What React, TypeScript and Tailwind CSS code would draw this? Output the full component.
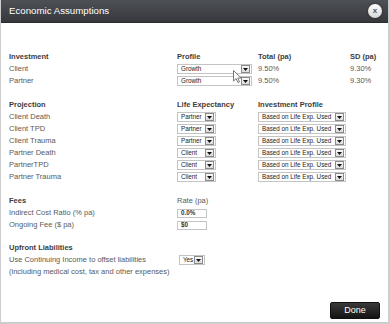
import React from "react";

const font = { fontFamily: '"Liberation Sans", Arial, sans-serif' };

const Select = ({ value, width }: { value: string; width: string }) => (
  <div
    className={`flex h-[10px] items-center justify-between border border-[#c4c4c4] bg-white pl-[3px] pr-[1px] ${width}`}
  >
    <span className="text-[6.3px] leading-none text-[#222]">{value}</span>
    <span className="flex h-[8px] w-[9px] items-center justify-center border border-[#8a8a8a] bg-gradient-to-b from-[#fafafa] to-[#dcdcdc]">
      <svg width="5" height="3" viewBox="0 0 5 3">
        <path d="M0 0h5L2.5 3z" fill="#111" />
      </svg>
    </span>
  </div>
);

const Input = ({ value }: { value: string }) => (
  <div className="flex h-[9px] w-[30px] items-center border border-[#c4c4c4] bg-white pl-[3px]">
    <span className="text-[6.3px] font-bold leading-none text-[#333]">{value}</span>
  </div>
);

const Row = ({ children }: { children: React.ReactNode }) => (
  <div className="grid h-[12px] grid-cols-[168px_81px_92px_1fr] items-center">{children}</div>
);

const Head = ({ children }: { children?: React.ReactNode }) => (
  <span className="font-bold text-[#3c3c3c]">{children}</span>
);

const Label = ({ children }: { children?: React.ReactNode }) => (
  <span className="text-[#595959]">{children}</span>
);

const projection = [
  ["Client Death", "Partner"],
  ["Client TPD", "Partner"],
  ["Client Trauma", "Partner"],
  ["Partner Death", "Client"],
  ["PartnerTPD", "Client"],
  ["Partner Trauma", "Client"],
];

export default function App() {
  return (
    <div
      style={font}
      className="relative flex h-[324px] w-[390px] flex-col overflow-hidden border-b-2 border-l border-r-2 border-[#cdcdcd] bg-white"
    >
      <div className="flex h-[23px] shrink-0 items-center justify-between border-b border-[#2a2c2f] bg-gradient-to-b from-[#4d5055] to-[#36383c] pl-[8px] pr-[6px]">
        <span className="text-[9.7px] leading-none text-white">Economic Assumptions</span>
        <span className="flex h-[14px] w-[14px] items-center justify-center rounded-full bg-gradient-to-b from-[#ffffff] to-[#d6d6d6] text-[8px] font-bold leading-none text-[#555] shadow-[0_0_2px_rgba(0,0,0,0.6)]">
          x
        </span>
      </div>

      <div className="flex flex-1 flex-col pl-[8px] pt-[28px] text-[7.5px] leading-none">
        <Row>
          <Head>Investment</Head>
          <Head>Profile</Head>
          <Head>Total (pa)</Head>
          <Head>SD (pa)</Head>
        </Row>
        <Row>
          <Label>Client</Label>
          <Select value="Growth" width="w-[75px]" />
          <Label>9.50%</Label>
          <Label>9.30%</Label>
        </Row>
        <Row>
          <Label>Partner</Label>
          <Select value="Growth" width="w-[75px]" />
          <Label>9.50%</Label>
          <Label>9.30%</Label>
        </Row>

        <div className="mt-[12px]">
          <Row>
            <Head>Projection</Head>
            <Head>Life Expectancy</Head>
            <Head>Investment Profile</Head>
            <span />
          </Row>
          {projection.map(([name, who]) => (
            <Row key={name}>
              <Label>{name}</Label>
              <Select value={who} width="w-[39px]" />
              <Select value="Based on Life Exp. Used" width="w-[88px]" />
              <span />
            </Row>
          ))}
        </div>

        <div className="mt-[12px]">
          <Row>
            <Head>Fees</Head>
            <Label>Rate (pa)</Label>
            <span />
            <span />
          </Row>
          <Row>
            <Label>Indirect Cost Ratio (% pa)</Label>
            <Input value="0.0%" />
            <span />
            <span />
          </Row>
          <Row>
            <Label>Ongoing Fee ($ pa)</Label>
            <Input value="$0" />
            <span />
            <span />
          </Row>
        </div>

        <div className="mt-[11px]">
          <Row>
            <Head>Upfront Liabilities</Head>
            <span />
            <span />
            <span />
          </Row>
          <Row>
            <Label>Use Continuing Income to offset liabilities</Label>
            <div className="ml-[2px]">
              <Select value="Yes" width="w-[26px]" />
            </div>
            <span />
            <span />
          </Row>
          <div className="flex h-[12px] items-center">
            <Label>(including medical cost, tax and other expenses)</Label>
          </div>
        </div>

        <div className="mt-auto flex justify-end pb-[3px] pr-[8px]">
          <button className="flex h-[17px] w-[50px] items-center justify-center rounded-[2px] border border-[#111] bg-gradient-to-b from-[#3a3a3a] to-[#141414] text-[9px] text-white">
            Done
          </button>
        </div>
      </div>

      <svg
        className="absolute left-[232px] top-[70px]"
        width="9"
        height="13"
        viewBox="0 0 9 13"
      >
        <path
          d="M0.5 0.5v10.5l2.6-2.4 1.8 3.9 1.6-0.7-1.8-3.8h3.5z"
          fill="#fff"
          stroke="#555"
          strokeWidth="0.8"
        />
      </svg>
    </div>
  );
}
